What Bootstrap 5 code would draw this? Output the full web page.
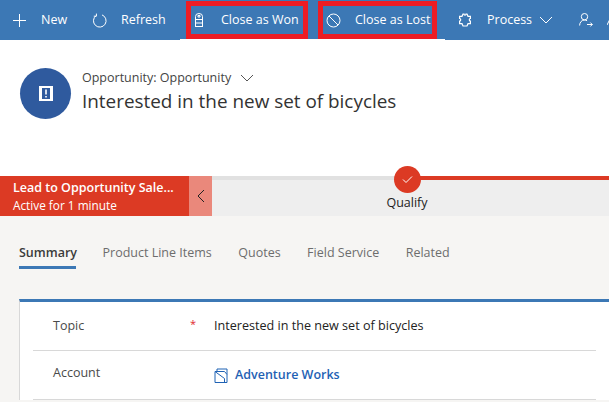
<!DOCTYPE html>
<html lang="en">
<head>
    <meta charset="UTF-8">
    <meta name="viewport" content="width=device-width, initial-scale=1.0">
    <title>Opportunity</title>
    <link href="https://cdn.jsdelivr.net/npm/bootstrap@5.3.3/dist/css/bootstrap.min.css" rel="stylesheet">
    <style>
        html, body {
            height: 402px;
            overflow: hidden;
        }
        body {
            background-color: #f6f5f3;
            font-family: "Open Sans", "Noto Sans", sans-serif;
            color: #333;
        }
        .cmd-bar {
            height: 40px;
            background-color: #fff;
            color: #fff;
            font-size: 12.5px;
            white-space: nowrap;
            overflow: hidden;
        }
        .cmd-item {
            height: 40px;
            flex: none;
            background-color: #3c78b5;
        }
        .cmd-item svg {
            flex: none;
        }
        .cmd-new { width: 78px; padding-left: 12px; gap: 14px; }
        .cmd-refresh { width: 102px; padding-left: 14px; gap: 14px; }
        .cmd-mid {
            width: 265px;
            height: 39px;
            flex: none;
            padding: 1px 8px 0 6px;
            gap: 10px;
            background-color: #3c78b5;
        }
        .cmd-won, .cmd-lost {
            height: 38px;
            flex: none;
            padding-left: 3px;
            border: 5px solid #ed1c24;
        }
        .cmd-won { width: 122px; gap: 17px; }
        .cmd-lost { width: 119px; gap: 14px; }
        .cmd-process { width: 134px; padding-left: 14px; gap: 16px; }
        .cmd-assign { flex: 1 0 auto; padding-left: 0; gap: 14px; }
        .cmd-drop { margin-left: -9px; }
        .head-box {
            height: 136px;
            background-color: #fff;
            padding: 28px 0 0 20px;
            gap: 11px;
        }
        .head-circle {
            width: 51px;
            height: 51px;
            flex: none;
            border-radius: 50%;
            background-color: #2f5a9e;
        }
        .head-type {
            font-size: 12.5px;
            line-height: 18px;
            margin-top: 1px;
            gap: 9px;
            color: #444;
        }
        .head-title {
            font-size: 18.9px;
            line-height: 28px;
            color: #333;
            white-space: nowrap;
        }
        .stage-band {
            height: 40px;
            background-color: #eeeeee;
            position: relative;
        }
        .stage-strip {
            position: absolute;
            top: 0;
            left: 212px;
            right: 0;
            height: 4px;
            background-color: #e1e1e1;
        }
        .stage-line {
            position: absolute;
            top: 0;
            left: 420px;
            right: 0;
            height: 4px;
            background-color: #dc3a24;
        }
        .stage-flag {
            width: 189px;
            flex: none;
            background-color: #dc3a24;
            color: #fff;
            padding: 3px 0 0 13px;
            white-space: nowrap;
        }
        .stage-name {
            font-size: 12.5px;
            font-weight: 600;
            line-height: 18px;
        }
        .stage-time {
            font-size: 11.8px;
            line-height: 17px;
        }
        .stage-back {
            width: 23px;
            flex: none;
            background-color: #ea887b;
        }
        .stage-dot {
            position: absolute;
            top: -10px;
            left: 394px;
            width: 27px;
            height: 27px;
            border-radius: 50%;
            background-color: #dc3a24;
        }
        .stage-label {
            position: absolute;
            top: 18px;
            left: 347px;
            width: 120px;
            text-align: center;
            font-size: 12.5px;
            line-height: 18px;
            color: #222;
        }
        .tab-row {
            height: 83px;
            padding: 27px 0 0 19px;
            gap: 26.5px;
            font-size: 12.5px;
            color: #6d6d6d;
            white-space: nowrap;
        }
        .tab-item {
            height: 26px;
            line-height: 20px;
        }
        .tab-on {
            width: 57px;
            font-weight: 600;
            color: #3b3b3b;
            border-bottom: 3px solid #3c78b5;
        }
        .form-box {
            margin-left: 19px;
            background-color: #fff;
            border-top: 3px solid #3c78b5;
            border-left: 1px solid #d8d8d8;
            padding-left: 13px;
            padding-right: 13px;
            font-size: 12.5px;
        }
        .form-line {
            height: 49px;
            border-bottom: 1px solid #d8d8d8;
        }
        .form-key {
            width: 157px;
            flex: none;
            padding-left: 20px;
            color: #4a4a4a;
        }
        .form-req {
            width: 24px;
            flex: none;
            font-size: 11px;
            color: #e0282e;
        }
        .form-val {
            font-size: 12.6px;
            color: #222;
        }
        .form-link {
            gap: 7px;
            color: #1f62b4;
            font-weight: 600;
            font-size: 12.5px;
            text-decoration: none;
        }
    </style>
</head>
<body>
    <div class="cmd-bar d-flex">
        <div class="cmd-item cmd-new d-flex align-items-center">
            <svg width="15" height="15" viewBox="0 0 15 15" fill="none" stroke="#fff" stroke-width="1"><path d="M7.5 1v13M1 7.500h13"/></svg>
            <span>New</span>
        </div>
        <div class="cmd-item cmd-refresh d-flex align-items-center">
            <svg width="15" height="15" viewBox="0 0 15 15" fill="none" stroke="#fff" stroke-width="1"><path d="M4.200 2.600A6.300 6.300 0 1 0 10 1.900M4.400 0.600v2.600H1.800"/></svg>
            <span>Refresh</span>
        </div>
        <div class="cmd-mid d-flex">
            <div class="cmd-won d-flex align-items-center">
                <svg width="10" height="14" viewBox="0 0 10 14" fill="none" stroke="#fff" stroke-width="1"><path d="M1.500 13.500V3.500a3.500 3 0 0 1 7 0v10M1.500 6.500h7M1.500 10h7M1 13.500h8M4 2.500h2v1.500H4z"/></svg>
                <span>Close as Won</span>
            </div>
            <div class="cmd-lost d-flex align-items-center">
                <svg width="15" height="15" viewBox="0 0 15 15" fill="none" stroke="#fff" stroke-width="1"><circle cx="7.500" cy="7.500" r="6.500"/><path d="M3 3l9 9"/></svg>
                <span>Close as Lost</span>
            </div>
        </div>
        <div class="cmd-item cmd-process d-flex align-items-center">
            <svg width="12" height="14" viewBox="0 0 12 14" fill="none" stroke="#fff" stroke-width="1.200"><path d="M4 1h1c0 1.500 2 1.500 2 0h1l1 2.300h2.400v2.200c-1.500 0-1.500 2.500 0 2.500v2.700H9L8 13H4l-1-2.300H.6V8c1.500 0 1.500-2.500 0-2.500V3.300H3z"/></svg>
            <span>Process</span>
            <svg class="cmd-drop" width="14" height="8" viewBox="0 0 14 8" fill="none" stroke="#fff" stroke-width="1"><path d="M1 1l6 6 6-6"/></svg>
        </div>
        <div class="cmd-item cmd-assign d-flex align-items-center">
            <svg width="14" height="14" viewBox="0 0 14 14" fill="none" stroke="#fff" stroke-width="1"><circle cx="5.500" cy="3.700" r="3.200"/><path d="M.6 12.500c0-3 2-5.500 4.900-5.500 1 0 1.900.3 2.600.8M8 11.500h5.300M11.300 9.500l2 2-2 2"/></svg>
            <svg width="6" height="14" viewBox="0 0 6 14" fill="none" stroke="#fff" stroke-width="1"><path d="M0 12L4 4"/></svg>
        </div>
    </div>

    <div class="head-box d-flex align-items-start">
        <div class="head-circle d-flex align-items-center justify-content-center">
            <svg width="14" height="15" viewBox="0 0 14 15"><path fill="#fff" d="M0 0h14v15H0z"/><path fill="#2f5a9e" d="M3 2h8v11H3z"/><path fill="#fff" d="M6.200 3.500h1.600v5H6.200zM6.200 10h1.600v1.500H6.200z"/></svg>
        </div>
        <div>
            <div class="head-type d-flex align-items-center">
                <span>Opportunity: Opportunity</span>
                <svg width="14" height="8" viewBox="0 0 14 8" fill="none" stroke="#555" stroke-width="1"><path d="M1 1l6 6 6-6"/></svg>
            </div>
            <div class="head-title">Interested in the new set of bicycles</div>
        </div>
    </div>

    <div class="stage-band d-flex">
        <div class="stage-flag">
            <div class="stage-name">Lead to Opportunity Sale...</div>
            <div class="stage-time">Active for 1 minute</div>
        </div>
        <div class="stage-back d-flex align-items-center justify-content-center">
            <svg width="8" height="14" viewBox="0 0 8 14" fill="none" stroke="#222" stroke-width="1"><path d="M7 1L1 7l6 6"/></svg>
        </div>
        <div class="stage-strip"></div>
        <div class="stage-line"></div>
        <div class="stage-dot d-flex align-items-center justify-content-center">
            <svg width="11" height="9" viewBox="0 0 11 9" fill="none" stroke="#fff" stroke-width="1"><path d="M1 4.500l3 3 6-6"/></svg>
        </div>
        <div class="stage-label">Qualify</div>
    </div>

    <div class="tab-row d-flex align-items-start">
        <div class="tab-item tab-on">Summary</div>
        <div class="tab-item">Product Line Items</div>
        <div class="tab-item">Quotes</div>
        <div class="tab-item">Field Service</div>
        <div class="tab-item">Related</div>
    </div>

    <div class="form-box">
        <div class="form-line d-flex align-items-center">
            <div class="form-key">Topic</div>
            <div class="form-req pb-1">*</div>
            <div class="form-val">Interested in the new set of bicycles</div>
        </div>
        <div class="form-line d-flex align-items-center">
            <div class="form-key pb-1">Account</div>
            <div class="form-req"></div>
            <a class="form-link d-flex align-items-center" href="#">
                <svg width="14" height="15" viewBox="0 0 14 15" fill="none" stroke="#1f62b4" stroke-width="1"><path d="M1 3.500h9.500l2.500 3v8H1zM3 3.500V1h10v5.500M1 3.500l9.500 7v4"/></svg>
                <span>Adventure Works</span>
            </a>
        </div>
    </div>
    <script src="https://cdn.jsdelivr.net/npm/bootstrap@5.3.3/dist/js/bootstrap.bundle.min.js"></script>
</body>
</html>
